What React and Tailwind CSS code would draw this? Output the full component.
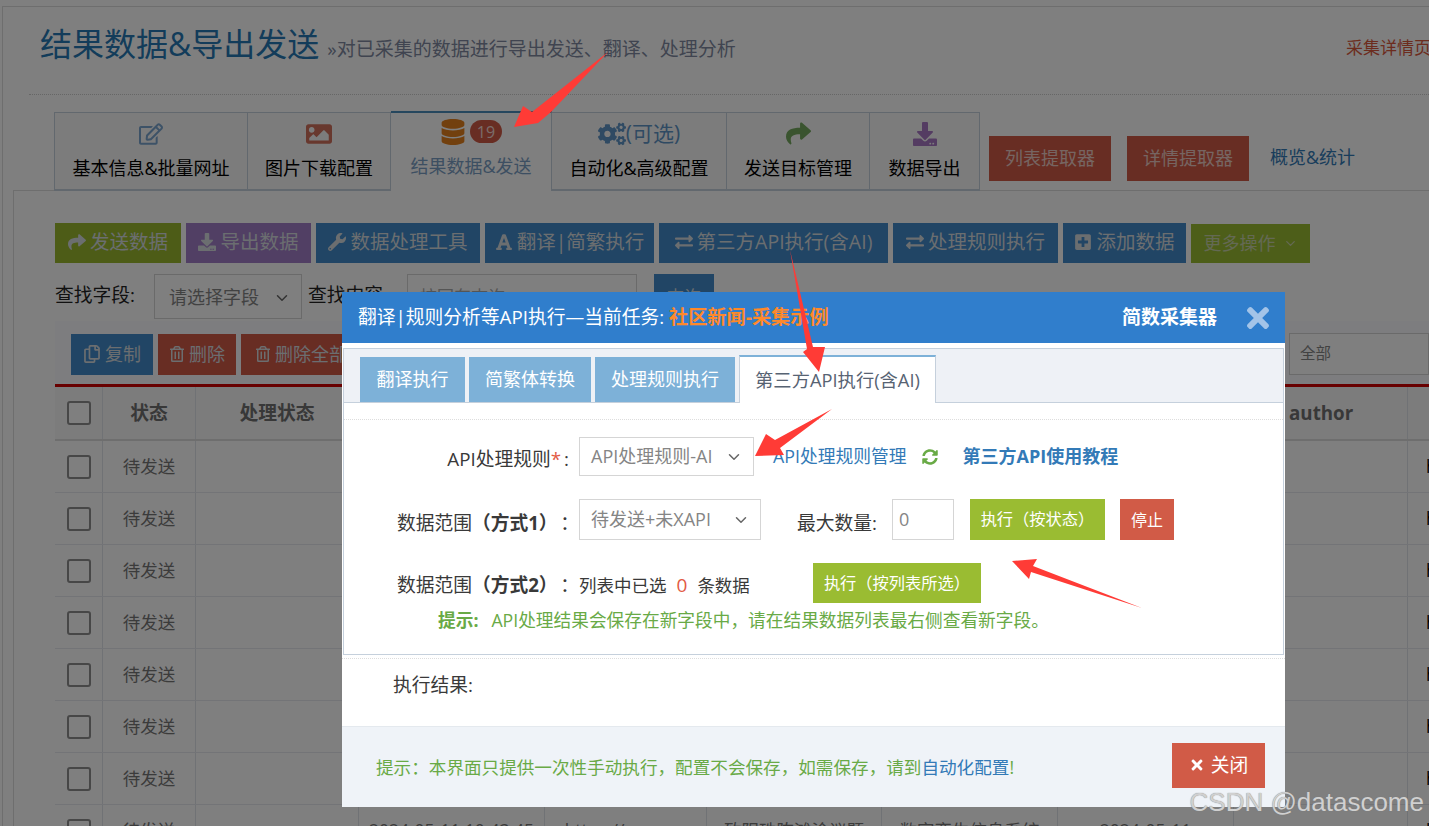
import React from "react";
import { FaRegEdit, FaImage, FaDatabase, FaCogs, FaShare, FaDownload, FaWrench, FaFont, FaExchangeAlt, FaPlusSquare, FaRegCopy, FaRegTrashAlt, FaSyncAlt, FaTimes } from "react-icons/fa";
import { ChevronDown } from "lucide-react";

const tabs = [
  { w: "w-[194px]", icon: <FaRegEdit className="text-[24px] text-[#7aa5cf]" />, label: "基本信息&批量网址" },
  { w: "w-[143px]", icon: <FaImage className="text-[26px] text-[#d0705c]" />, label: "图片下载配置" },
  { w: "w-[161px]", active: true, label: "结果数据&发送" },
  { w: "w-[175px]", icon: <span className="flex items-center text-[#5f94c6] text-[21px]"><FaCogs className="text-[28px]" />(可选)</span>, label: "自动化&高级配置" },
  { w: "w-[143px]", icon: <FaShare className="text-[25px] text-[#75a85e]" />, label: "发送目标管理" },
  { w: "w-[110px]", icon: <FaDownload className="text-[24px] text-[#a878c4]" />, label: "数据导出" },
];

const actions = [
  { w: "w-[126px]", bg: "bg-[#9ab82e]", icon: <FaShare />, label: "发送数据" },
  { w: "w-[125px]", bg: "bg-[#a27fc8]", icon: <FaDownload />, label: "导出数据" },
  { w: "w-[164px]", bg: "bg-[#428bca]", icon: <FaWrench />, label: "数据处理工具" },
  { w: "w-[169px]", bg: "bg-[#428bca]", icon: <FaFont />, label: "翻译|简繁执行" },
  { w: "w-[229px]", bg: "bg-[#428bca]", icon: <FaExchangeAlt />, label: "第三方API执行(含AI)" },
  { w: "w-[165px]", bg: "bg-[#428bca]", icon: <FaExchangeAlt />, label: "处理规则执行" },
  { w: "w-[123px]", bg: "bg-[#428bca]", icon: <FaPlusSquare />, label: "添加数据" },
];

const colWidths = ["w-[48px]", "w-[93px]", "w-[163px]", "w-[186px]", "w-[162px]", "w-[175px]", "w-[176px]", "w-[176px]", "w-[174px]", "w-[30px]"];
const heads = ["", "状态", "处理状态", "", "", "", "", "", "author", ""];
const last = ["", "", "", "2024-05-11 10:43:45", "https://www.cs", "致阳珠陈滩涂议题", "数字孪生信息系统", "2024-05-11", "", ""];

function Check() {
  return <span className="block w-[24px] h-[24px] border-2 border-[#8e8e8e] rounded-[3px] bg-white" />;
}

function Row({ cells, status, h = "h-[52px]" }) {
  return (
    <div className={`flex ${h} border-b border-[#e6e9ee] shrink-0`}>
      {colWidths.map((w, i) => (
        <div key={i} className={`${w} shrink-0 border-r border-[#e1e5ea] flex items-center justify-center whitespace-nowrap overflow-hidden text-[17.5px] text-[#777]`}>
          {i === 0 ? <Check /> : i === 1 ? status : i === 9 ? <span className="w-full pl-[18px] text-black">http</span> : cells && cells[i]}
        </div>
      ))}
    </div>
  );
}

function Select({ w, text, h = "h-[45px]", className = "" }) {
  return (
    <div className={`${w} ${h} ${className} border border-[#d5d5d5] bg-white flex items-center justify-between pl-[11px] pr-[10px] text-[18px] text-[#858585] shrink-0`}>
      <span className="whitespace-nowrap">{text}</span>
      <ChevronDown size={18} strokeWidth={2} className="text-[#666] shrink-0" />
    </div>
  );
}

function Modal() {
  return (
    <div className="absolute left-[342px] top-[292px] w-[943px] h-[515px] bg-white flex flex-col z-20 text-[18px] text-[#393939]">
      <div className="h-[51px] bg-[#307ecc] flex items-center pl-[16px] pr-[11px] text-white text-[18.75px] shrink-0">
        <span className="whitespace-nowrap">翻译|规则分析等API执行—当前任务: <b className="text-[19.2px] text-[#ff892a]">社区新闻-采集示例</b></span>
        <b className="ml-auto text-[19px] whitespace-nowrap">简数采集器</b>
        <FaTimes className="ml-[25px] text-[32px] text-[#a3c4e8]" />
      </div>
      <div className="mt-[5px] mx-[1px] h-[307px] border border-[#c5d0dc] shrink-0">
        <div className="h-[54px] bg-[#eef1f6] border-b border-[#c5d0dc] pl-[16px] flex items-end gap-[4px]">
          <div className="w-[105px] h-[45px] bg-[#7db1d8] text-white flex items-center justify-center">翻译执行</div>
          <div className="w-[122px] h-[45px] bg-[#7db1d8] text-white flex items-center justify-center">简繁体转换</div>
          <div className="w-[140px] h-[45px] bg-[#7db1d8] text-white flex items-center justify-center">处理规则执行</div>
          <div className="w-[197px] h-[48px] -mb-px bg-white border-t-2 border-x border-t-[#7db1d8] border-x-[#c5d0dc] text-[#576373] text-[18.3px] flex items-center justify-center whitespace-nowrap">第三方API执行(含AI)</div>
        </div>
        <div className="mt-[16px] border-t border-dotted border-[#ddd]" />
        <div className="mt-[17px] h-[39px] flex items-center">
          <div className="w-[225px] pt-[5px] text-right text-[18.75px] whitespace-nowrap">API处理规则<span className="text-[#e25a44]">*</span><span className="ml-[3px]">:</span></div>
          <Select w="w-[175px]" h="h-[39px]" text="API处理规则-AI" className="ml-[10px]" />
          <a className="ml-[19px] text-[17.8px] text-[#337ab7] whitespace-nowrap">API处理规则管理</a>
          <FaSyncAlt className="ml-[15px] text-[16px] text-[#69aa46]" />
          <b className="ml-[25px] text-[#337ab7] whitespace-nowrap">第三方API使用教程</b>
        </div>
        <div className="mt-[23px] h-[41px] flex items-center">
          <div className="w-[235px] pt-[8px] text-right text-[18.75px] whitespace-nowrap">数据范围<b>（方式1）</b><span className="ml-[12px]">：</span></div>
          <Select w="w-[182px]" h="h-[41px]" text="待发送+未XAPI" />
          <div className="ml-[36px] w-[95px] pt-[8px] text-[18.75px] whitespace-nowrap">最大数量:</div>
          <div className="w-[62px] h-[41px] border border-[#d5d5d5] flex items-center pl-[6px] text-[#858585]">0</div>
          <div className="ml-[16px] w-[135px] h-[41px] bg-[#9abc32] text-white text-[16.25px] flex items-center justify-center whitespace-nowrap">执行（按状态）</div>
          <div className="ml-[15px] w-[54px] h-[41px] bg-[#d15b47] text-white text-[16px] flex items-center justify-center">停止</div>
        </div>
        <div className="mt-[23px] h-[40px] flex items-center">
          <div className="w-[235px] pt-[5px] text-right text-[18.75px] whitespace-nowrap">数据范围<b>（方式2）</b><span className="ml-[12px]">：</span></div>
          <div className="w-[234px] pt-[5px] text-[17.5px] flex items-center whitespace-nowrap">列表中已选<span className="mx-[10px] text-[19px] text-[#e25a44]">0</span>条数据</div>
          <div className="w-[168px] h-[40px] bg-[#9abc32] text-white text-[16.25px] flex items-center justify-center whitespace-nowrap">执行（按列表所选）</div>
        </div>
        <div className="mt-[5px] pl-[94px] text-[17.7px] leading-[24px] text-[#69aa46] whitespace-nowrap"><b className="mr-[13px]">提示:</b>API处理结果会保存在新字段中，请在结果数据列表最右侧查看新字段。</div>
      </div>
      <div className="mt-[3px] border-t border-dotted border-[#ddd]" />
      <div className="mt-[14px] pl-[51px] text-[18.75px] leading-[24px]">执行结果:</div>
      <div className="mt-auto h-[81px] bg-[#eff3f8] border-t border-[#e4e9ee] flex items-center pl-[34px] pr-[20px] shrink-0">
        <span className="text-[17.6px] text-[#69aa46] whitespace-nowrap">提示：本界面只提供一次性手动执行，配置不会保存，如需保存，请到<span className="text-[#337ab7]">自动化配置</span>!</span>
        <div className="ml-auto -mt-[4px] w-[93px] h-[45px] bg-[#d15b47] text-white text-[18.75px] flex items-center justify-center gap-[6px]"><FaTimes className="text-[16px]" />关闭</div>
      </div>
    </div>
  );
}

export default function App() {
  return (
    <div className="relative w-[1429px] h-[826px] overflow-hidden bg-white font-['Open_Sans','Noto_Sans_CJK_SC',sans-serif] text-[#393939]">
      <div className="h-[820px] mt-[6px] ml-[2px] border-t border-l border-[#ddd]">
        <div className="ml-[26px] h-[88px] border-b border-dotted border-[#ccc] flex items-start pl-[11px] pt-[14px] whitespace-nowrap">
          <span className="text-[32px] leading-[46px] text-[#2679b5]">结果数据&导出发送</span>
          <span className="ml-[8px] mt-[14px] text-[19px] leading-[28px] text-[#8089a0]">»对已采集的数据进行导出发送、翻译、处理分析</span>
          <span className="ml-auto mt-[14px] -mr-[2px] text-[17px] leading-[26px] text-[#d9583c]">采集详情页</span>
        </div>
        <div className="relative z-10 -mb-px mt-[17px] ml-[51px] flex items-end h-[79px]">
          {tabs.map((t, i) => (
            <div key={i} className={`${t.w} flex flex-col items-center shrink-0 border-r border-t border-[#c5d0dc] ${i === 0 ? "border-l" : ""} ${t.active ? "h-[80px] border-t-2 border-t-[#4c8fbd] bg-white pt-[2px]" : "h-[79px] border-b-2 border-b-[#c5d0dc] bg-[#f9f9f9] pt-[4px]"}`}>
              <div className="h-[33px] flex items-center gap-[4px]">
                {t.active ? (
                  <>
                    <FaDatabase className="text-[26px] text-[#e5801c]" />
                    <span className="w-[32px] h-[23px] rounded-full bg-[#d15b47] text-[#f5d9d3] text-[16px] flex items-center justify-center">19</span>
                  </>
                ) : t.icon}
              </div>
              <div className={`mt-[5px] text-[18px] leading-[26px] whitespace-nowrap ${t.active ? "text-[#7b9ec4]" : "text-black"}`}>{t.label}</div>
            </div>
          ))}
          <div className="self-start mt-[24px] ml-[9px] w-[122px] h-[45px] bg-[#d15b47] text-[#eccbc5] text-[18px] flex items-center justify-center">列表提取器</div>
          <div className="self-start mt-[24px] ml-[16px] w-[122px] h-[45px] bg-[#d15b47] text-[#eccbc5] text-[18px] flex items-center justify-center">详情提取器</div>
          <div className="self-start mt-[32px] ml-[21px] text-[18px] leading-[26px] text-[#337ab7] whitespace-nowrap">概览&统计</div>
        </div>
        <div className="ml-[10px] h-[640px] border-t border-l border-[#ddd] pl-[41px] pt-[32px]">
          <div className="flex gap-[5px] h-[40px]">
            {actions.map((a, i) => (
              <div key={i} className={`${a.w} ${a.bg} text-[#d7dce0] text-[19.5px] pb-[2px] flex items-center justify-center gap-[4px] whitespace-nowrap shrink-0`}>
                <span className="text-[18px]">{a.icon}</span>{a.label}
              </div>
            ))}
            <div className="w-[119px] h-[39px] mt-px bg-[#9abc32] text-[#c9d3a8] text-[18px] flex items-center justify-center gap-[7px] shrink-0">更多操作<ChevronDown size={15} /></div>
          </div>
          <div className="mt-[11px] h-[45px] flex items-center">
            <span className="w-[99px] pb-[4px] text-[18.75px] leading-[24px] text-[#222] whitespace-nowrap">查找字段:</span>
            <Select w="w-[148px]" text="请选择字段" className="pl-[14px]! pt-[2px]" />
            <span className="ml-[6px] w-[99px] pb-[4px] text-[18.75px] leading-[24px] text-[#222] whitespace-nowrap">查找内容</span>
            <div className="w-[230px] h-[45px] border border-[#d5d5d5] pl-[12px] flex items-center text-[#aaa] text-[17px]">按回车查询</div>
            <div className="ml-[17px] w-[60px] h-[45px] bg-[#428bca] text-[#d7dce0] text-[17px] flex items-center justify-center">查询</div>
          </div>
          <div className="mt-[2px] h-[63px] bg-[#fafbff] flex items-center pt-[3px] pl-[16px] gap-[5px] text-[18px] text-[#d7dce0]">
            <div className="w-[82px] h-[41px] bg-[#428bca] flex items-center justify-center gap-[4px]"><FaRegCopy />复制</div>
            <div className="w-[78px] h-[41px] bg-[#d15b47] flex items-center justify-center gap-[4px]"><FaRegTrashAlt className="text-[16px]" />删除</div>
            <div className="w-[120px] h-[41px] bg-[#d15b47] flex items-center justify-center gap-[4px] whitespace-nowrap"><FaRegTrashAlt className="text-[16px]" />删除全部</div>
            <div className="ml-auto w-[140px] h-[42px] border border-[#d5d5d5] bg-white pl-[10px] flex items-center text-[15.5px] text-[#858585]">全部</div>
          </div>
          <div className="border-t-[3px] border-[#d00000] flex flex-col">
            <div className="flex h-[54px] border-b-2 border-[#ddd] bg-[#f9f9f9] shrink-0">
              {colWidths.map((w, i) => (
                <div key={i} className={`${w} shrink-0 border-r border-[#e1e5ea] flex items-center ${i === 8 ? "justify-start pl-[55px]" : "justify-center"} text-[18.75px] font-bold text-[#707070] whitespace-nowrap`}>
                  {i === 0 ? <Check /> : heads[i]}
                </div>
              ))}
            </div>
            {[0, 1, 2, 3, 4, 5, 6].map((i) => <Row key={i} status="待发送" />)}
            <Row status="待发送" cells={last} />
          </div>
        </div>
      </div>

      <div className="absolute inset-0 bg-black/50 z-10" />
      <Modal />

      <svg className="absolute left-0 top-0 z-30 pointer-events-none" width="1429" height="826" viewBox="0 0 1429 826">
        <polygon fill="#ff3b36" points="608,52 551,112 538,123 514,127 523,106 532,112" />
        <polygon fill="#ff3b36" points="790,250 813,347 825,347 819,372 803,352 807,349" />
        <polygon fill="#ff3b36" points="832,409 775,440 766,434 755,456 784,455 780,448" />
        <polygon fill="#ff3b36" points="1142,608 1033,566 1037,559 1012,561 1029,579 1031,572" />
      </svg>
      <div className="absolute right-[5px] top-[784px] z-30 text-[26px] leading-[36px] text-[#d0d0d0] whitespace-nowrap [text-shadow:0_0_1px_#777] font-['Liberation_Sans',sans-serif]">CSDN @datascome</div>
    </div>
  );
}
